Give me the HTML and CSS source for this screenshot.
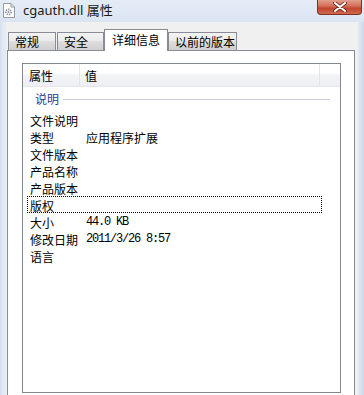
FILE: index.html
```html
<!DOCTYPE html>
<html lang="zh-CN">
<head>
    <meta charset="UTF-8">
    <meta name="viewport" content="width=device-width, initial-scale=1.0">
    <title>cgauth.dll 属性</title>
    <link rel="stylesheet" href="styles.css">
</head>
<body>
    <div class="window">
        <div class="titlebar">
            <svg class="file-icon" width="12" height="15" viewBox="0 0 12 15">
                <path d="M0.5 0.5 H8 L11.5 4 V14.5 H0.5 Z" fill="#fdfdfd" stroke="#9a9a9a"/>
                <path d="M8 0.5 V4 H11.5" fill="#e4e4e4" stroke="#9a9a9a"/>
                <circle cx="5.5" cy="9" r="2.6" fill="none" stroke="#8a95a3" stroke-width="1.6" stroke-dasharray="1.4 0.9"/>
                <circle cx="5.5" cy="9" r="1" fill="#8a95a3"/>
            </svg>
            <span class="title">cgauth.dll 属性</span>
            <div class="close-btn">
                <svg width="14" height="10" viewBox="0 0 14 10">
                    <path d="M2 1 L12 9 M12 1 L2 9" stroke="#6b2a20" stroke-width="3.6" stroke-linecap="round"/>
                    <path d="M2 1 L12 9 M12 1 L2 9" stroke="#ffffff" stroke-width="2" stroke-linecap="round"/>
                </svg>
            </div>
        </div>
        <div class="client">
            <div class="tabs">
                <div class="tab tab-general">常规</div>
                <div class="tab tab-security">安全</div>
                <div class="tab tab-details active">详细信息</div>
                <div class="tab tab-previous">以前的版本</div>
            </div>
            <div class="panel">
                <div class="listview">
                    <div class="lv-header">
                        <div class="col col-name">属性</div>
                        <div class="col col-value">值</div>
                        <div class="col col-rest"></div>
                    </div>
                    <div class="lv-group">
                        <span class="group-name">说明</span>
                        <span class="group-line"></span>
                    </div>
                    <div class="lv-row"><span class="key">文件说明</span><span class="val"></span></div>
                    <div class="lv-row"><span class="key">类型</span><span class="val">应用程序扩展</span></div>
                    <div class="lv-row"><span class="key">文件版本</span><span class="val"></span></div>
                    <div class="lv-row"><span class="key">产品名称</span><span class="val"></span></div>
                    <div class="lv-row"><span class="key">产品版本</span><span class="val"></span></div>
                    <div class="lv-row focused"><span class="key">版权</span><span class="val"></span></div>
                    <div class="lv-row"><span class="key">大小</span><span class="val mono">44.0 KB</span></div>
                    <div class="lv-row"><span class="key">修改日期</span><span class="val mono">2011/3/26 8:57</span></div>
                    <div class="lv-row"><span class="key">语言</span><span class="val"></span></div>
                </div>
            </div>
        </div>
    </div>
</body>
</html>
```

FILE: styles.css
```css
html, body {
    margin: 0;
    padding: 0;
}
body {
    font-family: "Noto Sans CJK SC", "Noto Sans", sans-serif;
    font-size: 12px;
    color: #000;
}
.window {
    width: 364px;
    height: 395px;
    overflow: hidden;
    display: flex;
    flex-direction: column;
    background: linear-gradient(to right, #d3dfee 0, #e2eaf4 3px, #e2eaf4 358px, #c9d8ea 364px);
}
.titlebar {
    height: 22px;
    flex: none;
    display: flex;
    align-items: flex-start;
    padding-left: 3px;
    background: linear-gradient(to bottom, #e4ecf6, #dbe5f2);
}
.file-icon {
    margin-top: 3px;
    flex: none;
}
.title {
    margin-left: 8px;
    margin-top: 1px;
    font-family: "Noto Sans", "Noto Sans CJK SC", sans-serif;
    font-size: 13px;
    line-height: 18px;
    color: #1a1a1a;
}
.close-btn {
    margin-left: auto;
    margin-right: 2px;
    width: 43px;
    height: 14px;
    border: 1px solid #7d3024;
    border-top: none;
    border-radius: 0 0 4px 4px;
    background: linear-gradient(to bottom, #e29f8e 0, #d4725d 40%, #c0462f 60%, #cf6a4f 100%);
    display: flex;
    align-items: center;
    justify-content: center;
}
.client {
    flex: 1;
    margin: 0 6px 0 6px;
    padding: 7px 3px 0 1px;
    background: #f0f0f0;
    display: flex;
    flex-direction: column;
}
.tabs {
    height: 21px;
    flex: none;
    display: flex;
    align-items: flex-end;
    padding-left: 1px;
    position: relative;
    z-index: 1;
}
.tab {
    height: 17px;
    border: 1px solid #898c95;
    border-bottom: none;
    background: linear-gradient(to bottom, #f3f3f3 0, #ebebeb 45%, #dddddd 50%, #cfcfcf 100%);
    line-height: 18px;
    padding-left: 6px;
    box-sizing: content-box;
}
.tab-general {
    width: 40px;
    margin-right: 1px;
}
.tab-security {
    width: 39px;
    margin-right: 0;
}
.tab.active {
    height: 21px;
    width: 55px;
    padding-left: 7px;
    background: #ffffff;
    line-height: 20px;
    margin-bottom: -1px;
}
.tab-previous {
    width: 61px;
}
.panel {
    flex: 1;
    border: 1px solid #898c95;
    border-bottom: none;
    background: #ffffff;
    padding: 12px 13px 0 14px;
}
.listview {
    height: 328px;
    border: 1px solid #828790;
    background: #ffffff;
}
.lv-header {
    height: 23px;
    display: flex;
    background: linear-gradient(to bottom, #ffffff 0, #ffffff 40%, #f3f4f6 50%, #eeeff2 100%);
    border-bottom: 1px solid #e4e6ea;
    box-sizing: border-box;
    line-height: 23px;
}
.col {
    border-right: 1px solid #e2e4e8;
}
.col-name {
    width: 50px;
    padding-left: 6px;
}
.col-value {
    width: 234px;
    padding-left: 5px;
}
.col-rest {
    flex: 1;
    border-right: none;
}
.lv-group {
    height: 24px;
    display: flex;
    align-items: center;
    padding-left: 12px;
    padding-right: 10px;
}
.group-name {
    color: #1e3c9a;
    line-height: 16px;
}
.group-line {
    flex: 1;
    height: 1px;
    margin-left: 4px;
    background: #c7cde0;
}
.lv-row {
    display: flex;
    height: 17px;
    line-height: 17px;
    margin-left: 4px;
    width: 295px;
    box-sizing: border-box;
    border: 1px solid transparent;
}
.lv-row.focused {
    border: 1px dotted #000;
}
.key {
    width: 56px;
    padding-left: 2px;
}
.val {
    flex: 1;
}
.mono {
    font-family: "Liberation Mono", monospace;
    font-size: 12px;
    letter-spacing: -1.2px;
}
```
